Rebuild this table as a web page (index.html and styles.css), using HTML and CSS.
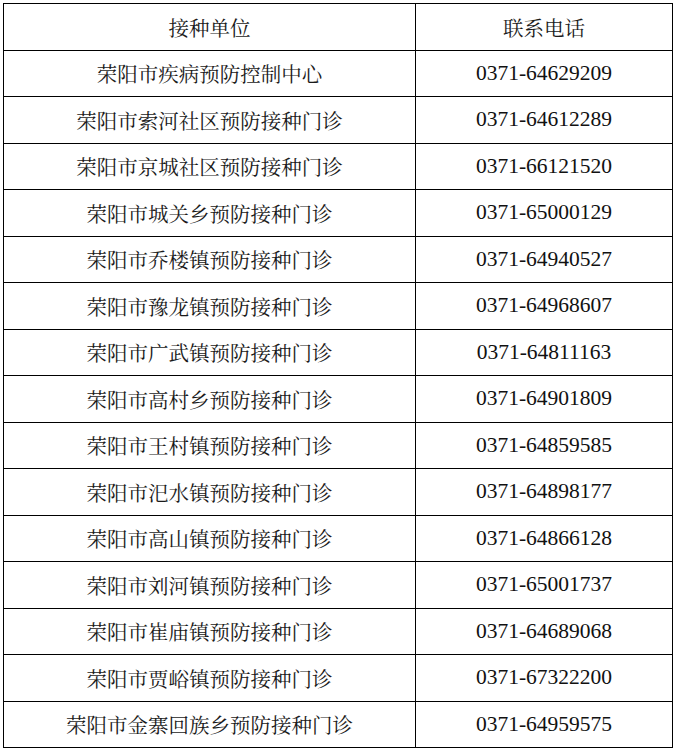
FILE: index.html
```html
<!DOCTYPE html>
<html lang="zh-CN">
<head>
<meta charset="utf-8">
<link rel="stylesheet" href="styles.css">
</head>
<body>
<table class="contacts">
  <colgroup><col class="col-unit"><col class="col-phone"></colgroup>
  <thead>
    <tr><th class="unit">接种单位</th><th class="phone-head">联系电话</th></tr>
  </thead>
  <tbody>
    <tr><td class="unit">荣阳市疾病预防控制中心</td><td class="phone">0371-64629209</td></tr>
    <tr><td class="unit">荣阳市索河社区预防接种门诊</td><td class="phone">0371-64612289</td></tr>
    <tr><td class="unit">荣阳市京城社区预防接种门诊</td><td class="phone">0371-66121520</td></tr>
    <tr><td class="unit">荣阳市城关乡预防接种门诊</td><td class="phone">0371-65000129</td></tr>
    <tr><td class="unit">荣阳市乔楼镇预防接种门诊</td><td class="phone">0371-64940527</td></tr>
    <tr><td class="unit">荣阳市豫龙镇预防接种门诊</td><td class="phone">0371-64968607</td></tr>
    <tr><td class="unit">荣阳市广武镇预防接种门诊</td><td class="phone">0371-64811163</td></tr>
    <tr><td class="unit">荣阳市高村乡预防接种门诊</td><td class="phone">0371-64901809</td></tr>
    <tr><td class="unit">荣阳市王村镇预防接种门诊</td><td class="phone">0371-64859585</td></tr>
    <tr><td class="unit">荣阳市汜水镇预防接种门诊</td><td class="phone">0371-64898177</td></tr>
    <tr><td class="unit">荣阳市高山镇预防接种门诊</td><td class="phone">0371-64866128</td></tr>
    <tr><td class="unit">荣阳市刘河镇预防接种门诊</td><td class="phone">0371-65001737</td></tr>
    <tr><td class="unit">荣阳市崔庙镇预防接种门诊</td><td class="phone">0371-64689068</td></tr>
    <tr><td class="unit">荣阳市贾峪镇预防接种门诊</td><td class="phone">0371-67322200</td></tr>
    <tr><td class="unit">荣阳市金寨回族乡预防接种门诊</td><td class="phone">0371-64959575</td></tr>
  </tbody>
</table>
</body>
</html>
```
FILE: styles.css
```css
html, body {
  margin: 0;
  padding: 0;
  background: #ffffff;
}
body {
  padding: 3px 0 0 3px;
}
.contacts {
  border-collapse: collapse;
  table-layout: fixed;
  width: 669px;
  color: #1a1a1a;
  font-family: "Noto Serif CJK SC", "Noto Sans CJK SC", sans-serif;
  font-size: 20.5px;
  font-weight: 400;
}
.col-unit { width: 412px; }
.col-phone { width: 257px; }
.contacts th,
.contacts td {
  border: 1px solid #000;
  height: 45.5px;
  padding: 0;
  text-align: center;
  vertical-align: middle;
  font-weight: 400;
  line-height: 1;
  white-space: nowrap;
}
.phone {
  font-family: "Liberation Serif", serif;
  font-size: 21.5px;
  letter-spacing: 0;
  color: #111;
}
```
